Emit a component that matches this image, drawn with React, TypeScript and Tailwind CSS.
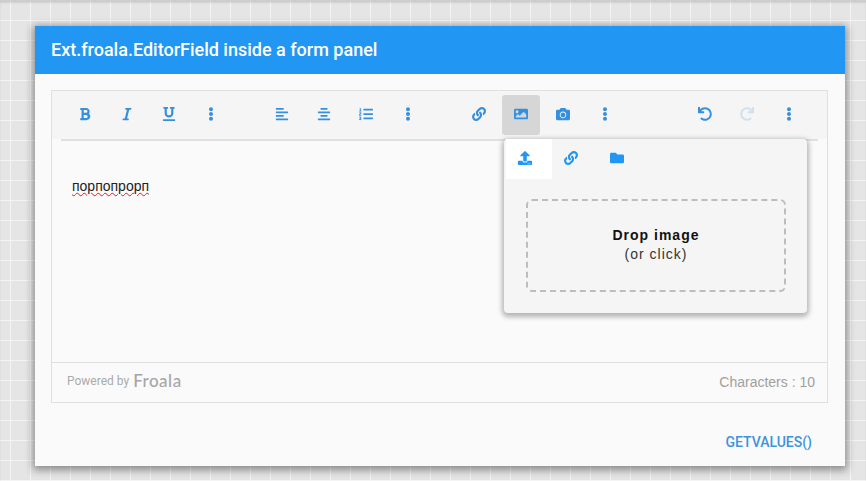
import type { ReactNode } from "react";
import {
  FaAlignCenter,
  FaAlignLeft,
  FaBold,
  FaCamera,
  FaEllipsisV,
  FaFolder,
  FaImage,
  FaItalic,
  FaLink,
  FaListOl,
  FaRedo,
  FaUnderline,
  FaUndo,
  FaUpload,
} from "react-icons/fa";

function ToolButton({ children, active, muted }: { children: ReactNode; active?: boolean; muted?: boolean }) {
  return (
    <div className="flex h-12 w-[42px] items-center justify-center">
      <div
        className={`flex h-10 w-[38px] items-center justify-center rounded-[3px] pb-[2px] text-[14px] ${
          active ? "bg-[#d6d6d6]" : ""
        } ${muted ? "text-[#cfe0ee]" : "text-[#3490de]"}`}
      >
        {children}
      </div>
    </div>
  );
}

function Toolbar() {
  return (
    <div className="flex h-12 bg-[#f5f5f5] pl-3">
      <ToolButton><FaBold /></ToolButton>
      <ToolButton><FaItalic /></ToolButton>
      <ToolButton><FaUnderline /></ToolButton>
      <ToolButton><FaEllipsisV /></ToolButton>
      <div className="w-[29px]" />
      <ToolButton><FaAlignLeft /></ToolButton>
      <ToolButton><FaAlignCenter /></ToolButton>
      <ToolButton><FaListOl /></ToolButton>
      <ToolButton><FaEllipsisV /></ToolButton>
      <div className="w-[29px]" />
      <ToolButton><FaLink /></ToolButton>
      <ToolButton active><FaImage /></ToolButton>
      <ToolButton><FaCamera /></ToolButton>
      <ToolButton><FaEllipsisV /></ToolButton>
      <div className="w-[58px]" />
      <ToolButton><FaUndo /></ToolButton>
      <ToolButton muted><FaRedo /></ToolButton>
      <ToolButton><FaEllipsisV /></ToolButton>
    </div>
  );
}

function ImagePopup() {
  return (
    <div className="absolute left-[452px] top-[48px] h-[174px] w-[303px] rounded-[4px] bg-[#f5f5f5] px-[2px] shadow-[0_2px_5px_2px_rgba(0,0,0,0.28)]">
      <div className="flex h-10 text-[14px] text-[#2196f3]">
        <div className="flex w-[46px] items-center justify-center bg-white pb-[2px] pr-2"><FaUpload /></div>
        <div className="flex w-[46px] items-center justify-center pb-[2px] pr-2"><FaLink /></div>
        <div className="flex w-[46px] items-center justify-center pb-[2px] pr-2"><FaFolder /></div>
      </div>
      <div className="ml-[20px] mt-5 flex h-[93px] w-[260px] flex-col items-center justify-center rounded-[6px] border-2 border-dashed border-[#bdbdbd] pb-[2px] font-['Liberation_Sans',sans-serif] text-[14px] leading-[19px] tracking-[1px]">
        <div className="font-bold text-[#111]">Drop image</div>
        <div className="text-[#333]">(or click)</div>
      </div>
    </div>
  );
}

export default function App() {
  return (
    <div className="h-[481px] w-[866px] overflow-hidden bg-[#e5e5e5] bg-[linear-gradient(to_right,#f4f4f4_1px,transparent_1px),linear-gradient(to_bottom,#f4f4f4_1px,transparent_1px)] bg-[size:20px_20px] bg-[position:10px_0px] pl-[35px] pt-[26px] shadow-[inset_0_3px_3px_-1px_rgba(0,0,0,0.18)]">
      <div className="flex h-[440px] w-[810px] flex-col bg-[#fafafa] shadow-[0_2px_8px_2px_rgba(0,0,0,0.4)]">
        <div className="flex h-12 items-center bg-[#2196f3] pb-[2px] pl-4 font-['Roboto',sans-serif] text-[18px] font-medium text-white">
          Ext.froala.EditorField inside a form panel
        </div>
        <div className="relative mx-4 mt-4 h-[313px] w-[777px] border border-[#e0e0e0]">
          <Toolbar />
          <div className="mx-[9px] h-[2px] bg-[#e0e0e0]" />
          <div className="h-[221px] pl-5 pt-[37px] font-['Liberation_Sans',sans-serif] text-[14px] leading-4 text-[#222]">
            <span className="underline decoration-[#e02020] decoration-wavy decoration-1">порпопрорп</span>
          </div>
          <div className="flex h-10 items-center justify-between border-t border-[#e0e0e0] pb-[3px] pl-[15px] pr-3">
            <div className="flex items-center gap-[4px] font-['Roboto',sans-serif] text-[12px] text-[#aaa]">
              Powered by
              <span className="font-['Lato',sans-serif] text-[17px] font-medium tracking-[0.5px] text-[#a6a6a6]">Froala</span>
            </div>
            <div className="pt-[2px] font-['Liberation_Sans',sans-serif] text-[14px] text-[#a0a0a0]">Characters : 10</div>
          </div>
          <ImagePopup />
        </div>
        <div className="flex flex-1 items-center justify-end pr-[33px] pt-[15px] font-['Roboto',sans-serif] text-[14px] font-medium text-[#3d93dd]">
          GETVALUES()
        </div>
      </div>
    </div>
  );
}
